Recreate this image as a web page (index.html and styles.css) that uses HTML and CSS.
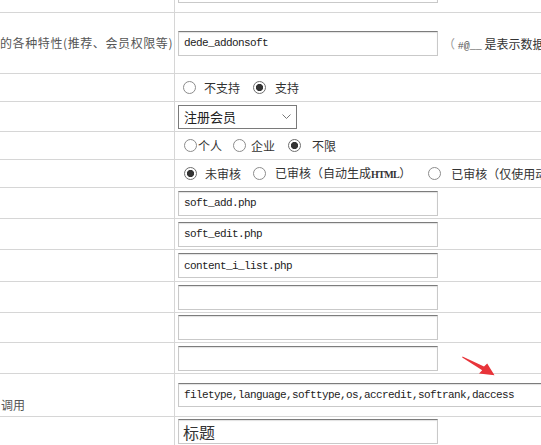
FILE: index.html
```html
<!DOCTYPE html>
<html lang="zh-CN">
<head>
<meta charset="utf-8">
<title>内容模型</title>
<link rel="stylesheet" href="styles.css">
</head>
<body>
<div class="form">
  <div class="row h38 first">
    <div class="label"></div>
    <div class="field"><input class="txt" type="text" value=""></div>
  </div>
  <div class="row h61">
    <div class="label wideline">的各种特性(推荐、会员权限等)</div>
    <div class="field">
      <input class="txt" type="text" value="dede_addonsoft">
      <span class="note"><span class="paren">（</span> <span class="code">#@__</span> 是表示数据表前缀）</span>
    </div>
  </div>
  <div class="row h28">
    <div class="label"></div>
    <div class="field">
      <input class="radio r-a" type="radio" name="sup"><span class="opt">不支持</span>
      <input class="radio r-b" type="radio" name="sup" checked><span class="opt">支持</span>
    </div>
  </div>
  <div class="row h30">
    <div class="label"></div>
    <div class="field">
      <div class="select">
        <span class="sel-text">注册会员</span>
        <svg class="chev" width="9" height="5" viewBox="0 0 9 5"><polyline points="0.5,0.5 4.5,4.5 8.5,0.5" fill="none" stroke="#777" stroke-width="1"/></svg>
      </div>
    </div>
  </div>
  <div class="row h28">
    <div class="label"></div>
    <div class="field">
      <input class="radio g-1" type="radio" name="who"><span class="opt">个人</span>
      <input class="radio g-2" type="radio" name="who"><span class="opt">企业</span>
      <input class="radio g-3" type="radio" name="who" checked><span class="opt">不限</span>
    </div>
  </div>
  <div class="row h28">
    <div class="label"></div>
    <div class="field">
      <input class="radio s-1" type="radio" name="st" checked><span class="opt">未审核</span>
      <input class="radio s-2" type="radio" name="st"><span class="opt">已审核（自动生成<span class="html">HTML</span>）</span>
      <input class="radio s-3" type="radio" name="st"><span class="opt">已审核（仅使用动态页）</span>
    </div>
  </div>
  <div class="row h31">
    <div class="label"></div>
    <div class="field"><input class="txt" type="text" value="soft_add.php"></div>
  </div>
  <div class="row h31">
    <div class="label"></div>
    <div class="field"><input class="txt" type="text" value="soft_edit.php"></div>
  </div>
  <div class="row h32">
    <div class="label"></div>
    <div class="field"><input class="txt" type="text" value="content_i_list.php"></div>
  </div>
  <div class="row h31">
    <div class="label"></div>
    <div class="field"><input class="txt" type="text" value=""></div>
  </div>
  <div class="row h30">
    <div class="label"></div>
    <div class="field"><input class="txt" type="text" value=""></div>
  </div>
  <div class="row h31">
    <div class="label"></div>
    <div class="field"><input class="txt" type="text" value=""></div>
  </div>
  <div class="row h43">
    <div class="label bottom">调用</div>
    <div class="field"><input class="txt wide" type="text" value="filetype,language,softtype,os,accredit,softrank,daccess"></div>
  </div>
  <div class="row h40 top">
    <div class="label"></div>
    <div class="field"><input class="txt big" type="text" value="标题"></div>
  </div>
</div>
<svg class="arrow" width="50" height="30" viewBox="0 0 50 30">
  <polygon points="7.5,6.5 29,16.6 32.2,13.6 39.5,25.2 24,23.4 27.2,20.2 7.2,7.6" fill="#e8343a"/>
</svg>
</body>
</html>
```

FILE: styles.css
```css
html, body {
  margin: 0;
  padding: 0;
  background: #fff;
}
body {
  width: 541px;
  height: 445px;
  overflow: hidden;
  position: relative;
  font-family: "Noto Sans CJK SC", "Noto Sans", sans-serif;
  font-size: 12px;
  color: #333;
}
.form {
  margin-top: -25px;
  width: 541px;
}
.row {
  display: flex;
  box-sizing: border-box;
  border-bottom: 1px solid #d6d6d6;
}
.h28 { height: 28px; }
.h30 { height: 30px; }
.h31 { height: 31px; }
.h32 { height: 32px; }
.h38 { height: 38px; }
.h40 { height: 40px; }
.h43 { height: 43px; }
.h61 { height: 61px; }

.label {
  width: 175px;
  flex: none;
  box-sizing: border-box;
  border-right: 1px solid #d6d6d6;
  display: flex;
  align-items: center;
  white-space: nowrap;
  overflow: hidden;
  color: #555;
  font-size: 12px;
  line-height: 16px;
}
.label.wideline {
  letter-spacing: 0.6px;
}
.label.bottom {
  align-items: flex-end;
  padding-bottom: 3px;
  padding-left: 1px;
}
.field {
  flex: 1;
  min-width: 0;
  display: flex;
  align-items: center;
  padding-left: 3px;
  white-space: nowrap;
}
.first .field,
.top .field {
  align-items: flex-start;
  padding-top: 2px;
}
.first .field { padding-top: 3px; }

.txt {
  box-sizing: border-box;
  width: 260px;
  height: 25px;
  margin: 0;
  padding: 0 0 0 5px;
  border: 1px solid #c9c9c9;
  border-top-color: #7c7c7c;
  box-shadow: inset 0 1px 1px rgba(0,0,0,0.12);
  background: #fff;
  font-family: "Liberation Mono", monospace;
  font-size: 11px;
  letter-spacing: -0.6px;
  color: #222;
  outline: none;
  flex: none;
}
.txt.wide { width: 430px; height: 24px; }
.txt.big {
  font-family: "Noto Sans CJK SC", sans-serif;
  font-size: 16px;
  letter-spacing: 0;
  padding-left: 4px;
  color: #333;
}

.note {
  margin-left: 5px;
  color: #333;
  font-size: 12px;
}
.note .paren { color: #999; }
.note .code {
  font-family: "Liberation Mono", monospace;
  font-size: 10px;
  color: #555;
}

.radio {
  appearance: none;
  -webkit-appearance: none;
  box-sizing: border-box;
  width: 13px;
  height: 13px;
  margin: 0;
  border: 1px solid #8c8c8c;
  border-radius: 50%;
  background: #fff;
  flex: none;
}
.radio:checked {
  background: radial-gradient(circle, #333 0, #333 3.2px, #fff 4px);
  border-color: #6e6e6e;
}
.opt {
  color: #333;
  font-size: 12px;
  line-height: 16px;
}
.r-a { margin: 0 8px 0 5px; }
.r-b { margin: 0 9px 0 13px; }
.g-1 { margin: 0 1px 0 6px; }
.g-2 { margin: 0 5px 0 11px; }
.g-3 { margin: 0 11px 0 13px; }
.s-1 { margin: 0 8px 0 6px; }
.s-2 { margin: 0 9px 0 12px; }
.s-3 { margin: 0 10px 0 17px; }
.html {
  font-family: "Liberation Serif", serif;
  font-size: 10px;
  font-weight: bold;
  letter-spacing: -0.6px;
}

.select {
  box-sizing: border-box;
  width: 119px;
  height: 24px;
  border: 1px solid #7a7a7a;
  display: flex;
  align-items: center;
  justify-content: space-between;
  padding: 0 5px 0 5px;
  background: #fff;
}
.sel-text {
  font-size: 13px;
  color: #222;
}

.arrow {
  position: absolute;
  left: 455px;
  top: 350px;
}
```
